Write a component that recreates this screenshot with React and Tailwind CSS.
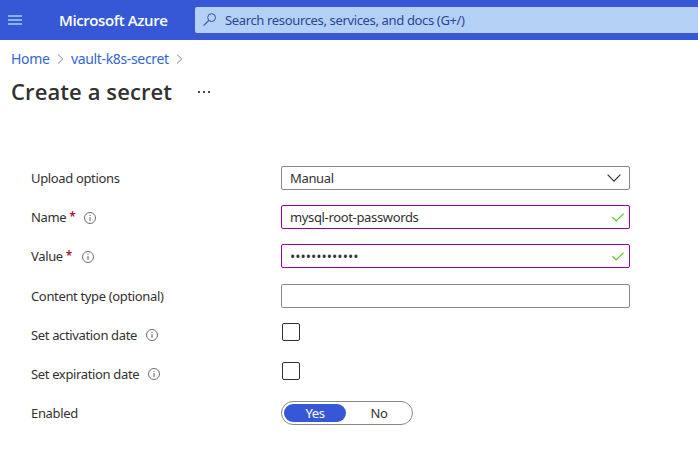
import React from 'react';

const Info = () => (
  <svg className="size-3 shrink-0" viewBox="0 0 12 12" fill="none" stroke="#605e5c">
    <circle cx="6" cy="6" r="5.5" strokeWidth="0.9" />
    <path d="M6 5v4M6 3v1" strokeWidth="1" />
  </svg>
);

const Crumb = () => (
  <svg className="h-3 w-[7px] shrink-0" viewBox="0 0 7 12" fill="none" stroke="#8a8886">
    <path d="M1 1.5 5.8 6 1 10.5" />
  </svg>
);

const Check = () => (
  <svg className="h-[9px] w-3 shrink-0" viewBox="0 0 12 9" fill="none" stroke="#5ec42c" strokeWidth="1.2">
    <path d="M.4 4.2 4.2 8 11.6.6" />
  </svg>
);

function Row({ label, required, info, infoGap, children, className = '' }) {
  return (
    <div className={'flex h-[39px] items-start ' + className}>
      <div className="flex h-6 w-[250px] shrink-0 items-center whitespace-nowrap">
        <span>{label}</span>
        {required && <span className="ml-[3px] text-[12px] font-semibold text-[#b01030]">*</span>}
        {info && <span className={infoGap}><Info /></span>}
      </div>
      {children}
    </div>
  );
}

const box = 'flex h-6 w-[349px] items-center justify-between rounded-xs border pl-2 ';
const checkbox = 'ml-px size-[18px] rounded-xs border border-[#323130]';

export default function App() {
  return (
    <div className="h-[457px] w-[698px] overflow-hidden bg-white font-['Noto_Sans','Open_Sans',sans-serif] text-[13px] leading-5 tracking-[-0.35px] text-[#323130]">
      <header className="flex h-10 items-center bg-[#3658d7]">
        <svg className="ml-2 h-[10px] w-[14px]" viewBox="0 0 14 10" fill="#86b3ee">
          <path d="M0 0h14v2H0zM0 4h14v2H0zM0 8h14v2H0z" />
        </svg>
        <div className="ml-[37px] w-[136px] whitespace-nowrap font-['Open_Sans'] text-[15px] font-semibold tracking-[-0.4px] text-white">Microsoft Azure</div>
        <div className="flex h-[26px] flex-1 items-center rounded-l-xs bg-[#b4d0f5] pl-2 text-[#2b4695]">
          <svg className="size-3.5" viewBox="0 0 14 14" fill="none" stroke="#30539f">
            <circle cx="8.6" cy="4.6" r="3.9" />
            <path d="M5.8 7.4.6 12.6" strokeWidth="1.2" />
          </svg>
          <span className="ml-2 whitespace-nowrap">Search resources, services, and docs (G+/)</span>
        </div>
      </header>
      <nav className="ml-[11px] flex h-[38px] items-center whitespace-nowrap text-[#3764d7]">
        <span className="w-[46px] text-[14px]">Home</span>
        <Crumb />
        <span className="ml-[7px] w-[105px] text-[14px]">vault-k8s-secret</span>
        <Crumb />
      </nav>
      <div className="ml-[11px] flex h-7 items-center">
        <h1 className="-mt-0.5 w-[187px] whitespace-nowrap font-['Open_Sans'] text-[22px] font-semibold tracking-[0.1px]">Create a secret</h1>
        <div className="flex gap-[3px]">
          <i className="size-[2px] bg-[#484644]" />
          <i className="size-[2px] bg-[#484644]" />
          <i className="size-[2px] bg-[#484644]" />
        </div>
      </div>
      <main className="ml-[31px] mt-[60px]">
        <Row label="Upload options">
          <div className={box + 'border-[#8a8886] pr-[8px]'}>
            <span>Manual</span>
            <svg className="h-2 w-3.5" viewBox="0 0 14 8" fill="none" stroke="#323130" strokeWidth="1.2">
              <path d="m.6.7 6.4 6.4L13.4.7" />
            </svg>
          </div>
        </Row>
        <Row label="Name" required info infoGap="mt-px ml-[9px]">
          <div className={box + 'border-[#9400a0] pr-[5px]'}>
            <span>mysql-root-passwords</span>
            <Check />
          </div>
        </Row>
        <Row label="Value" required info infoGap="mt-px ml-[10px]" className="mb-px">
          <div className={box + 'border-[#9400a0] pr-[5px]'}>
            <span className="mt-px font-['Open_Sans'] text-[14px] tracking-[0px]">•••••••••••••</span>
            <Check />
          </div>
        </Row>
        <Row label="Content type (optional)">
          <div className={box + 'border-[#8a8886]'} />
        </Row>
        <Row label="Set activation date" info infoGap="ml-[9px]">
          <div className={checkbox} />
        </Row>
        <Row label="Set expiration date" info infoGap="ml-[9px]">
          <div className={checkbox} />
        </Row>
        <Row label="Enabled">
          <div className="flex h-6 w-[132px] items-center rounded-full border border-[#8a8886] px-0.5">
            <span className="flex h-[18px] w-[62px] items-center justify-center rounded-full bg-[#3658d7] text-white">Yes</span>
            <span className="flex flex-1 justify-center pl-0.5">No</span>
          </div>
        </Row>
      </main>
    </div>
  );
}
